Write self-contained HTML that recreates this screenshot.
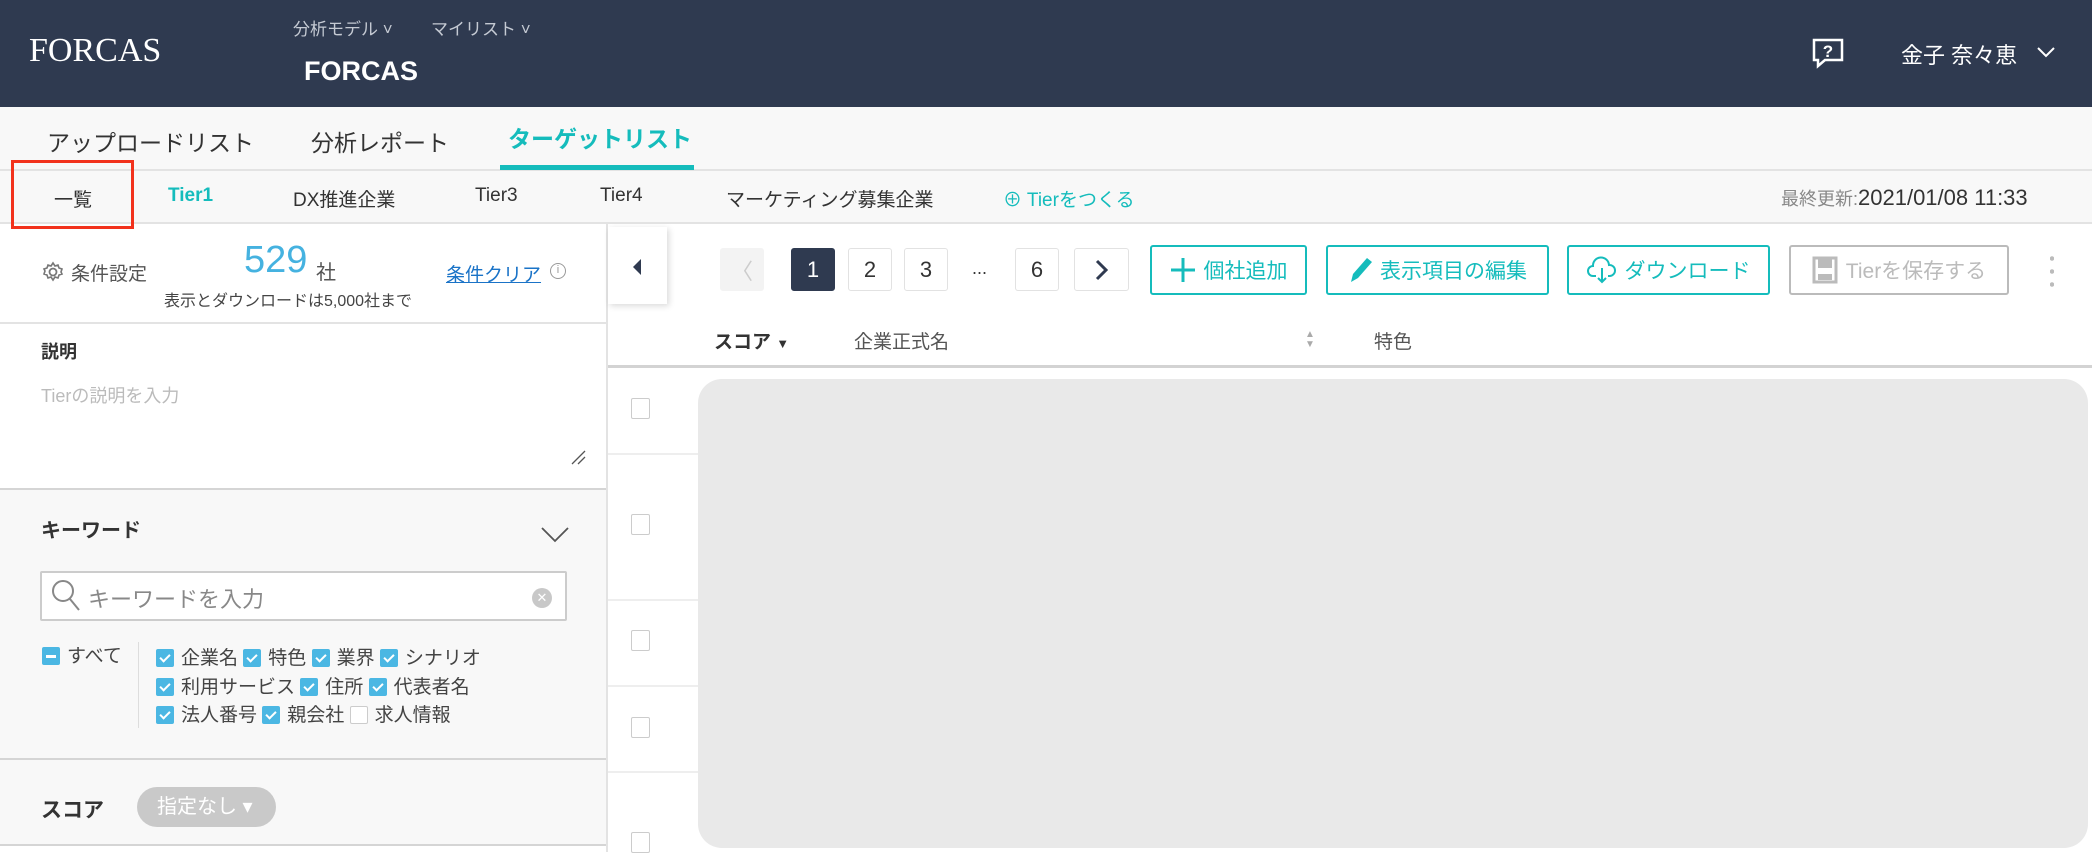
<!DOCTYPE html>
<html><head><meta charset="utf-8">
<style>
*{box-sizing:border-box;margin:0;padding:0}
body{width:2092px;height:852px;overflow:hidden;background:#fff;font-family:"Liberation Sans","Noto Sans CJK JP",sans-serif;color:#333;position:relative}
.a{position:absolute;white-space:nowrap}
.hdr{left:0;top:0;width:2092px;height:107px;background:#2f3a50}
.teal{color:#15bcbc}
.btn{position:absolute;border:2px solid #15bcbc;border-radius:3px;color:#15bcbc;font-size:21px;display:flex;align-items:center;justify-content:center;gap:8px;background:#fff}
.pg{position:absolute;top:248px;width:44px;height:43px;border:1px solid #e2e2e2;border-radius:3px;display:flex;align-items:center;justify-content:center;font-size:22px;color:#333;background:#fff}
.cb{display:inline-block;width:18px;height:18px;background:#4bb7e3;border-radius:2px;vertical-align:-3px;margin-right:7px;position:relative}
.cb:after{content:"";position:absolute;left:6px;top:3px;width:4px;height:8px;border:solid #fff;border-width:0 2px 2px 0;transform:rotate(45deg)}
.cbm{display:inline-block;width:18px;height:18px;background:#4bb7e3;border-radius:2px;vertical-align:-3px;margin-right:7px;position:relative}
.cbm:after{content:"";position:absolute;left:4px;top:8px;width:10px;height:2.5px;background:#fff}
.cbe{display:inline-block;width:18px;height:18px;border:1.5px solid #ccc;border-radius:2px;vertical-align:-3px;margin-right:7px;background:#fff}
.rcb{position:absolute;left:631px;width:19px;height:21px;border:1.5px solid #ccc;border-radius:2px}
.kw{font-size:19px;color:#444}
</style></head><body>
<div class="a hdr"></div>
<div class="a" style="left:29px;top:32px;font-family:'Liberation Serif',serif;font-size:34px;color:#fff">FORCAS</div>
<div class="a" style="left:293px;top:15px;font-size:17px;color:#c5cad3">分析モデル ˅</div>
<div class="a" style="left:431px;top:15px;font-size:17px;color:#c5cad3">マイリスト ˅</div>
<div class="a" style="left:304px;top:56px;font-size:27px;font-weight:bold;color:#fff">FORCAS</div>
<svg class="a" style="left:1811px;top:37px" width="34" height="32" viewBox="0 0 34 32"><path d="M3 3h28v20H14l-7 6v-6H3z" fill="none" stroke="#fff" stroke-width="2.5"/><text x="17" y="20" font-size="17" font-weight="bold" fill="#fff" text-anchor="middle" font-family="Liberation Sans">?</text></svg>
<div class="a" style="left:1901px;top:38px;font-size:22px;color:#fff">金子 奈々恵</div>
<svg class="a" style="left:2036px;top:46px" width="20" height="12"><path d="M2 2l8 8 8-8" fill="none" stroke="#fff" stroke-width="2"/></svg>

<div class="a" style="left:0;top:107px;width:2092px;height:64px;background:#f8f8f8;border-bottom:2px solid #e3e3e3"></div>
<div class="a" style="left:47px;top:124px;font-size:23px;color:#333">アップロードリスト</div>
<div class="a" style="left:311px;top:124px;font-size:23px;color:#333">分析レポート</div>
<div class="a teal" style="left:508px;top:120px;font-size:23px;font-weight:bold">ターゲットリスト</div>
<div class="a" style="left:500px;top:165px;width:194px;height:5px;background:#15bcbc"></div>

<div class="a" style="left:0;top:171px;width:2092px;height:53px;background:#f8f8f8;border-bottom:2px solid #e3e3e3"></div>
<div class="a" style="left:11px;top:160px;width:123px;height:69px;border:3px solid #f2321c"></div>
<div class="a" style="left:54px;top:185px;font-size:19px">一覧</div>
<div class="a teal" style="left:168px;top:185px;font-size:19px;font-weight:bold">Tier1</div>
<div class="a" style="left:293px;top:185px;font-size:19px">DX推進企業</div>
<div class="a" style="left:475px;top:185px;font-size:19px">Tier3</div>
<div class="a" style="left:600px;top:185px;font-size:19px">Tier4</div>
<div class="a" style="left:726px;top:185px;font-size:19px">マーケティング募集企業</div>
<div class="a teal" style="left:1003px;top:185px;font-size:19px">⊕ Tierをつくる</div>
<div class="a" style="left:1781px;top:185px;font-size:18px;color:#888">最終更新:<span style="font-size:22px;color:#333">2021/01/08 11:33</span></div>

<div class="a" style="left:606px;top:224px;width:2px;height:628px;background:#e3e3e3"></div>
<svg class="a" style="left:42px;top:261px" width="22" height="22" viewBox="0 0 22 22"><circle cx="11" cy="11" r="3.5" fill="none" stroke="#777" stroke-width="1.8"/><path d="M11 2l2 3 3-1 1 3 3 1-1 3 1 2-3 1-1 3-3-1-2 3-2-3-3 1-1-3-3-1 1-3-1-2 3-1 1-3 3 1z" fill="none" stroke="#777" stroke-width="1.6"/></svg>
<div class="a" style="left:71px;top:259px;font-size:19px;color:#555">条件設定</div>
<div class="a" style="left:244px;top:239px;font-size:38px;color:#45b2e0">529</div>
<div class="a" style="left:316px;top:256px;font-size:20px;color:#555">社</div>
<div class="a" style="left:164px;top:287px;font-size:16px;color:#444">表示とダウンロードは5,000社まで</div>
<div class="a" style="left:446px;top:260px;font-size:19px;color:#1a73c7;text-decoration:underline">条件クリア</div>
<div class="a" style="left:550px;top:263px;width:16px;height:16px;border:1.5px solid #999;border-radius:50%;font-size:11px;color:#999;text-align:center;line-height:13px">i</div>
<div class="a" style="left:0;top:322px;width:606px;height:2px;background:#e3e3e3"></div>
<div class="a" style="left:41px;top:338px;font-size:18px;font-weight:bold">説明</div>
<div class="a" style="left:41px;top:382px;font-size:18px;color:#bbb">Tierの説明を入力</div>
<svg class="a" style="left:570px;top:449px" width="16" height="16"><path d="M2 15L15 2M8 15L15 8" stroke="#555" stroke-width="1.3"/></svg>
<div class="a" style="left:0;top:488px;width:606px;height:272px;background:#f8f8f8;border-top:2px solid #d5d5d5;border-bottom:2px solid #d5d5d5"></div>
<div class="a" style="left:41px;top:514px;font-size:20px;font-weight:bold">キーワード</div>
<svg class="a" style="left:541px;top:527px" width="28" height="16"><path d="M1 1l13 13 13-13" fill="none" stroke="#555" stroke-width="1.8"/></svg>
<div class="a" style="left:40px;top:571px;width:527px;height:50px;background:#fff;border:2px solid #ccc;border-radius:2px"></div>
<svg class="a" style="left:50px;top:578px" width="34" height="36"><circle cx="13" cy="13" r="10" fill="none" stroke="#888" stroke-width="2"/><path d="M20 21l9 11" stroke="#888" stroke-width="2"/></svg>
<div class="a" style="left:88px;top:582px;font-size:22px;color:#888">キーワードを入力</div>
<div class="a" style="left:532px;top:588px;width:20px;height:20px;border-radius:50%;background:#c8c8c8;color:#fff;font-size:13px;text-align:center;line-height:20px">✕</div>
<div class="a kw" style="left:42px;top:641px"><span class="cbm"></span>すべて</div>
<div class="a" style="left:138px;top:642px;width:1px;height:86px;background:#ddd"></div>
<div class="a kw" style="left:156px;top:643px"><span class="cb"></span>企業名 <span class="cb"></span>特色 <span class="cb"></span>業界 <span class="cb"></span>シナリオ</div>
<div class="a kw" style="left:156px;top:672px"><span class="cb"></span>利用サービス <span class="cb"></span>住所 <span class="cb"></span>代表者名</div>
<div class="a kw" style="left:156px;top:700px"><span class="cb"></span>法人番号 <span class="cb"></span>親会社 <span class="cbe"></span>求人情報</div>
<div class="a" style="left:0;top:760px;width:606px;height:86px;background:#f8f8f8;border-bottom:2px solid #d5d5d5"></div>
<div class="a" style="left:41px;top:794px;font-size:21px;font-weight:bold">スコア</div>
<div class="a" style="left:137px;top:787px;width:139px;height:40px;border-radius:20px;background:#c9c9c9;color:#fff;font-size:20px;line-height:40px;padding-left:20px">指定なし ▾</div>

<div class="a" style="left:608px;top:227px;width:59px;height:77px;background:#fff;box-shadow:2px 2px 6px rgba(0,0,0,.15)"></div>
<svg class="a" style="left:631px;top:258px" width="12" height="18"><path d="M10 1L2 9l8 8z" fill="#2f3a50"/></svg>
<div class="pg" style="left:720px;border:none;background:#f3f3f3;color:#ccc">〈</div>
<div class="pg" style="left:791px;background:#2f3a50;color:#fff;border-color:#2f3a50">1</div>
<div class="pg" style="left:848px">2</div>
<div class="pg" style="left:904px">3</div>
<div class="a" style="left:972px;top:258px;font-size:18px">...</div>
<div class="pg" style="left:1015px">6</div>
<div class="pg" style="left:1074px;width:55px"><svg width="14" height="22"><path d="M2 2l9 9-9 9" fill="none" stroke="#2f3a50" stroke-width="3"/></svg></div>
<div class="btn" style="left:1150px;top:245px;width:157px;height:50px"><svg width="26" height="26"><path d="M13 1v24M1 13h24" stroke="#15bcbc" stroke-width="3"/></svg>個社追加</div>
<div class="btn" style="left:1326px;top:245px;width:223px;height:50px"><svg width="24" height="28"><path d="M3 26l2-8 14-16 5 4-14 16z" fill="#15bcbc"/></svg>表示項目の編集</div>
<div class="btn" style="left:1567px;top:245px;width:203px;height:50px"><svg width="30" height="28"><path d="M9 20H6a5 5 0 0 1 0-10 8 8 0 0 1 16-1 5 5 0 0 1 1 11h-2M15 12v14M11 22l4 4 4-4" fill="none" stroke="#15bcbc" stroke-width="2"/></svg>ダウンロード</div>
<div class="btn" style="left:1789px;top:245px;width:220px;height:50px;border-color:#bbb;color:#bbb"><svg width="26" height="28"><path d="M2 2h22v24H2z" fill="none" stroke="#bbb" stroke-width="3"/><rect x="6" y="3" width="14" height="9" fill="#bbb"/><rect x="6" y="18" width="14" height="6" fill="#bbb"/></svg>Tierを保存する</div>
<div class="a" style="left:2050px;top:252px;width:4px;height:36px;background:radial-gradient(circle,#bbb 2px,transparent 2.5px) 0 0/4px 13px"></div>
<div class="a" style="left:714px;top:327px;font-size:19px;font-weight:bold">スコア <span style="font-size:13px">▼</span></div>
<div class="a" style="left:854px;top:327px;font-size:19px;color:#555">企業正式名</div>
<div class="a" style="left:1305px;top:330px;font-size:10px;color:#aaa;line-height:10px">▲<br>▼</div>
<div class="a" style="left:1374px;top:327px;font-size:19px;color:#555">特色</div>
<div class="a" style="left:608px;top:365px;width:1484px;height:3px;background:#d3d3d3"></div>
<div class="a" style="left:608px;top:453px;width:90px;height:2px;background:#eee"></div>
<div class="a" style="left:608px;top:599px;width:90px;height:2px;background:#eee"></div>
<div class="a" style="left:608px;top:685px;width:90px;height:2px;background:#eee"></div>
<div class="a" style="left:608px;top:771px;width:90px;height:2px;background:#eee"></div>
<div class="rcb" style="top:398px"></div>
<div class="rcb" style="top:514px"></div>
<div class="rcb" style="top:630px"></div>
<div class="rcb" style="top:717px"></div>
<div class="rcb" style="top:832px"></div>
<div class="a" style="left:698px;top:379px;width:1390px;height:469px;background:#e9e9e9;border-radius:24px"></div>
</body></html>
